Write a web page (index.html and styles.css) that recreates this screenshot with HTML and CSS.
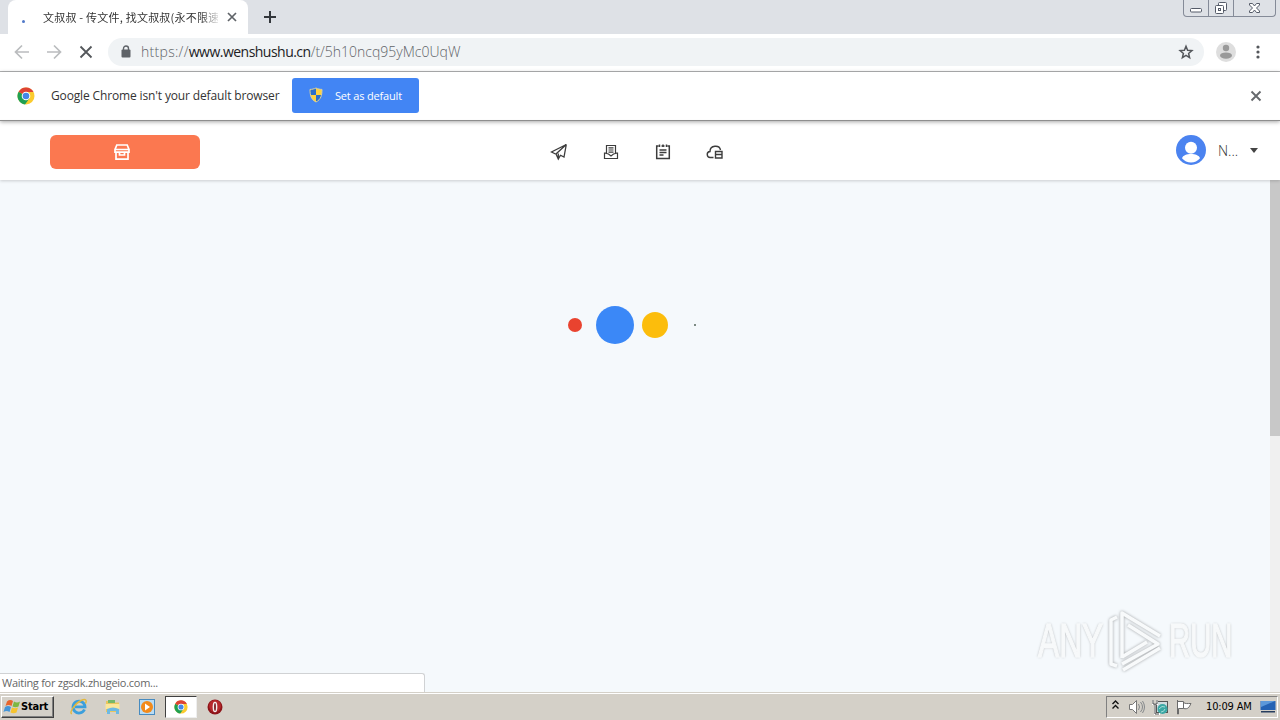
FILE: index.html
```
<!DOCTYPE html>
<html lang="en">
<head>
<meta charset="utf-8">
<title>Desktop</title>
<link rel="stylesheet" href="styles.css">
</head>
<body>

<div class="tabstrip">
  <div class="tab-edge"></div>
  <div class="tab">
    <span class="spinner"></span>
    <span class="tab-title">文叔叔 - 传文件, 找文叔叔(永不限速</span>
    <svg class="tab-close" width="10" height="10" viewBox="0 0 10 10"><path d="M1 1l8 8M9 1l-8 8" stroke="#5f6368" stroke-width="1.7"/></svg>
  </div>
  <svg class="new-tab" width="12" height="12" viewBox="0 0 12 12"><path d="M6 0v12M0 6h12" stroke="#33373c" stroke-width="2"/></svg>
  <div class="window-buttons">
    <span class="wb"><svg width="14" height="6" viewBox="0 0 14 6"><rect x="1.5" y="1.5" width="11" height="3.5" rx="1" fill="#fff" stroke="#555b68"/></svg></span>
    <span class="wb"><svg width="14" height="14" viewBox="0 0 14 14" fill="#fff" stroke="#555b68"><rect x="4.500" y="1.500" width="8" height="8" rx="1"/><rect x="1.500" y="4.500" width="8" height="8" rx="1"/><rect x="4.500" y="7.500" width="2" height="2"/></svg></span>
    <span class="wb wb-wide"><svg width="13" height="12" viewBox="0 0 13 12"><path d="M1.500 1.500h3l2 2.500 2-2.500h3v1.500l-3 3 3 3v1.500h-3l-2-2.500-2 2.500h-3V9l3-3-3-3z" fill="#fff" stroke="#555b68"/></svg></span>
  </div>
</div>

<div class="toolbar">
  <svg class="nav" width="16" height="16" viewBox="0 0 16 16" fill="none" stroke="#babcbe" stroke-width="1.7"><path d="M15 8H2M8 1.500L1.500 8 8 14.500"/></svg>
  <svg class="nav" width="16" height="16" viewBox="0 0 16 16" fill="none" stroke="#babcbe" stroke-width="1.7"><path d="M1 8h13M8 1.500L14.500 8 8 14.500"/></svg>
  <svg class="nav" width="16" height="16" viewBox="0 0 16 16" fill="none" stroke="#54575b" stroke-width="1.8"><path d="M2.500 2.500l11 11M13.500 2.500l-11 11"/></svg>
  <div class="omnibox">
    <svg width="10" height="13" viewBox="0 0 10 13"><rect x="0.500" y="4.500" width="9" height="8" rx="1" fill="#5f6368"/><path d="M2.500 5V3.500a2.500 2.500 0 0 1 5 0V5" fill="none" stroke="#5f6368" stroke-width="1.400"/></svg>
    <span class="url"><span class="scheme">https://</span><b>www.wenshushu.cn</b>/t/5h10ncq95yMc0UqW</span>
    <svg class="star" width="16" height="16" viewBox="0 0 16 16"><path d="M8 2.200l1.600 4 4.300.4-3.300 2.800 1 4.200L8 11.400l-3.600 2.200 1-4.200-3.300-2.800 4.300-.4z" fill="none" stroke="#54575b" stroke-width="1.500"/></svg>
  </div>
  <svg class="profile" width="20" height="20" viewBox="0 0 20 20"><circle cx="10" cy="10" r="10" fill="#dedede"/><circle cx="10" cy="6" r="3.200" fill="#999"/><ellipse cx="10" cy="13.600" rx="6" ry="3.200" fill="#999"/></svg>
  <svg class="menu" width="4" height="14" viewBox="0 0 4 14" fill="#54575b"><circle cx="2" cy="2" r="1.600"/><circle cx="2" cy="7" r="1.600"/><circle cx="2" cy="12" r="1.600"/></svg>
</div>

<div class="infobar">
  <svg class="chrome" width="18" height="18" viewBox="0 0 18 18"><use href="#chrome-logo"/></svg>
  <span class="info-text">Google Chrome isn't your default browser</span>
  <div class="default-btn">
    <svg width="14" height="16" viewBox="0 0 14 16"><path d="M7 1c2 1 4 1.400 6 1.400 0 6-1 10-6 12.600C2 12.400 1 8.400 1 2.400 3 2.400 5 2 7 1z" fill="#ffd23d"/><path d="M7 1v7H1.300Q1 5.500 1 2.400 4.500 2.300 7 1zM7 8h5.700C12 11.500 10.500 13.500 7 15z" fill="#2b6fc9"/><path d="M7 1c2 1 4 1.400 6 1.400 0 6-1 10-6 12.600C2 12.400 1 8.400 1 2.400 3 2.400 5 2 7 1z" fill="none" stroke="#d8d0a0"/></svg>
    <span>Set as default</span>
  </div>
  <svg class="info-close" width="12" height="12" viewBox="0 0 12 12"><path d="M1.500 1.500l9 9M10.500 1.500l-9 9" stroke="#66696d" stroke-width="1.900"/></svg>
</div>

<div class="site-header">
  <div class="shop-btn">
    <svg width="18" height="18" viewBox="0 0 18 18" fill="none" stroke="#fff" stroke-width="1.700"><path d="M3.800 2h10.400l1.800 4.500v2.700H2V6.500zM3 9v7.200h12V9M2 6.500h14M6.500 9v3h5V9"/></svg>
  </div>
  <div class="site-nav">
    <svg width="18" height="18" viewBox="0 0 18 18" fill="none" stroke="#3c3c3c" stroke-width="1.300"><path d="M16.300 1.500L1.500 9l4 2M16.300 1.500L14 14l-4-2M16.300 1.500L6 11l2.300 5 2-3.500M8.300 16v-5.500"/></svg>
    <svg width="18" height="18" viewBox="0 0 18 18" fill="none" stroke="#3c3c3c" stroke-width="1.200"><path d="M4.500 10V2.500h9V10M6.500 4.800h5M6.500 7h5M6.500 9.200h5M4.500 10h-2v5.500h13V10h-2M2.500 10l4 1 2.500 2 2.500-2 4-1"/></svg>
    <svg width="18" height="18" viewBox="0 0 18 18" fill="none" stroke="#3c3c3c" stroke-width="1.500"><path d="M4.500 3H2.700v12.500h12.600V3h-1.800M7.500 3h3M5.500 1.500v2.500M9 1.500v2.500M12.500 1.500v2.500M5.500 7h7M5.500 9.500h7M5.500 12h4"/></svg>
    <svg width="18" height="18" viewBox="0 0 18 18" fill="none" stroke="#3c3c3c" stroke-width="1.400"><path d="M7.500 14.500H4.500a3 3 0 0 1-.5-6c0-6.500 9.500-7 10.500-1.500M9.500 8.500h6.500v6.500H9.500zM9.500 11.500H16"/></svg>
  </div>
  <div class="user">
    <svg width="30" height="30" viewBox="0 0 30 30"><circle cx="15" cy="15" r="15" fill="#4b83f0"/><circle cx="15" cy="12.800" r="6" fill="#fff"/><path d="M6 23.200c1.500-5.600 16.500-5.600 18 0-4.500 5.600-13.500 5.600-18 0z" fill="#fff"/></svg>
    <span class="user-name">N...</span>
    <span class="caret"></span>
  </div>
</div>

<div class="page">
  <div class="page-body">
    <div class="loader">
      <span class="cell"><i class="dot red"></i></span>
      <span class="cell"><i class="dot blue"></i></span>
      <span class="cell"><i class="dot yellow"></i></span>
      <span class="cell"><i class="dot green"></i></span>
    </div>
  </div>
  <div class="scrollbar"><div class="thumb"></div></div>

  <div class="status">Waiting for zgsdk.zhugeio.com...</div>
  <div class="watermark">
    <span class="wm-text">ANY</span>
    <svg width="60" height="66" viewBox="0 0 60 66" fill="none" stroke-linejoin="round" stroke="#f8fafb" stroke-width="3.500"><path d="M17 50V5l38 23M17 13v35M23 17l30 19-36 20M12 9L6 12v44l6 2M17 49l25-15M18 62l37-22"/></svg>
    <span class="wm-text wm-run">RUN</span>
  </div>
</div>

<div class="taskbar">
  <div class="start">
    <svg width="18" height="16" viewBox="0 0 18 16"><path d="M4 2.500Q7 0 10 2L8.500 7Q5.500 5 2.500 7z" fill="#e8652c"/><path d="M11 2.500Q14 4.500 17 2.500L15.500 7.500Q12.500 9 9.500 7.500z" fill="#7db742"/><path d="M2 8Q5 6 8 8L6.500 13Q3.500 11 .5 13z" fill="#4595d8"/><path d="M9 8.500Q12 10 15 8.500L13.500 13.500Q10.500 15 7.500 13.500z" fill="#f6c32e"/></svg>
    <span>Start</span>
  </div>
  <div class="quick">
    <svg width="18" height="18" viewBox="0 0 18 18" fill="none"><path d="M14.500 11.500A6 6 0 1 1 15 8.800H5" stroke="#3b9fdc" stroke-width="2.800"/><path d="M2 15.500C-1.500 16 4 6 11 2.500c5-2.500 6 0 4.500 3" stroke="#e3b83d" stroke-width="1.400"/></svg>
  </div>
  <div class="quick">
    <svg width="18" height="18" viewBox="0 0 18 18"><path d="M2 3h5l1 1.500h7V14H2z" fill="#e9c65e"/><path d="M4 2h7v3H4z" fill="#75b869"/><path d="M1.500 6h14v5h-14z" fill="#fae79c"/><path d="M3 16v-5q6-3 12 0v5h-3v-3H6v3z" fill="#6db9e3"/></svg>
  </div>
  <div class="quick">
    <svg width="18" height="18" viewBox="0 0 18 18"><rect x="1.500" y="1.500" width="15" height="15" fill="#b9dcf4" stroke="#478bc0"/><circle cx="9" cy="9" r="6" fill="#f28a1b"/><path d="M7 5.500l5 3.500-5 3.500z" fill="#fff"/></svg>
  </div>
  <div class="quick active">
    <svg width="14" height="14" viewBox="0 0 18 18">
      <g id="chrome-logo">
        <circle cx="9" cy="9" r="8.500" fill="#fbcb2e"/>
        <path d="M9 9L1.600 4.700A8.500 8.500 0 0 0 8 17.400L12.700 11z" fill="#1fa052"/>
        <path d="M9 9L1.600 4.700A8.500 8.500 0 0 1 16.500 5H9z" fill="#dd4335"/>
        <circle cx="9" cy="9" r="4.300" fill="#fff"/><circle cx="9" cy="9" r="3.300" fill="#4487e8"/>
      </g>
    </svg>
  </div>
  <div class="quick">
    <svg width="16" height="16" viewBox="0 0 16 16"><circle cx="8" cy="8" r="7.500" fill="#8e1419"/><circle cx="8" cy="7" r="6" fill="#b7282c"/><ellipse cx="8" cy="8" rx="2.400" ry="5.300" fill="#f4eeee"/><ellipse cx="8" cy="8" rx=".9" ry="4" fill="#76171c"/></svg>
  </div>
  <div class="tray">
    <svg class="t-up" width="7" height="10" viewBox="0 0 7 10" fill="none" stroke="#111" stroke-width="1.400"><path d="M.5 4l3-3 3 3M.5 8.500l3-3 3 3"/></svg>
    <svg class="t-sound" width="18" height="16" viewBox="0 0 18 16"><path d="M1.500 5.500h3l4-4v13l-4-4h-3z" fill="#fff" stroke="#777"/><path d="M10.500 5q2 3 0 6M12.500 3q4 5 0 10M14.500 2q4 6 0 12" fill="none" stroke="#85888b"/></svg>
    <svg class="t-net" width="16" height="16" viewBox="0 0 16 16"><rect x="4.500" y="2.500" width="11" height="11" fill="#d0dce0" stroke="#555"/><path d="M1 1v4h4V1M3 5v10h5" fill="none" stroke="#fff" stroke-width="2"/><path d="M1 1v4h4V1M3 5v10h4" fill="none" stroke="#444"/><circle cx="10.500" cy="10" r="5" fill="#3aa7a4"/><path d="M7 10q3-4 6-2M9 13q3 0 4-3" stroke="#a6ded8" fill="none"/></svg>
    <svg class="t-flag" width="16" height="16" viewBox="0 0 16 16"><path d="M1.500 1v14h1V9.500h5v-7h-6M7.500 3.500c2 1.500 4 1 7.500 1-2 4-3 6-7.500 5" fill="#fff" stroke="#6b6b6b"/></svg>
    <span class="clock">10:09 AM</span>
    <svg class="t-desk" width="16" height="13" viewBox="0 0 16 13"><path d="M.5 1h15v9H.5z" fill="#2462b4"/><path d="M1 1h14L1 7z" fill="#5c98da"/><path d="M1 11h14v1.500H1z" fill="#273d5e"/></svg>
  </div>
</div>

</body>
</html>
```

FILE: styles.css
```
* {
  box-sizing: border-box;
}

body {
  margin: 0;
  width: 1280px;
  height: 720px;
  overflow: hidden;
  display: flex;
  flex-direction: column;
  background: #fff;
  font-family: "Open Sans", "Noto Sans", "Noto Sans CJK SC", sans-serif;
  font-size: 12px;
  color: #333;
}

svg {
  display: block;
  flex: none;
}

/* tabs */
.tabstrip {
  height: 34px;
  flex: none;
  display: flex;
  background: #dee1e6;
}

.tab-edge {
  width: 8px;
  background: #dee1e6;
}

.tab {
  width: 240px;
  display: flex;
  align-items: center;
  background: #fff;
  border-radius: 8px 8px 0 0;
}

.spinner {
  width: 3px;
  height: 3px;
  margin: 8px 0 0 14px;
  border-radius: 50%;
  background: #5179c8;
}

.tab-title {
  width: 175px;
  margin: 0 0 1px 18px;
  overflow: hidden;
  white-space: nowrap;
  font-family: "Noto Sans CJK SC", sans-serif;
  font-size: 11px;
  letter-spacing: 0.22px;
  -webkit-mask-image: linear-gradient(to right, #000 158px, transparent 178px);
  mask-image: linear-gradient(to right, #000 158px, transparent 178px);
}

.tab-close {
  margin-left: 9px;
}

.new-tab {
  margin: 11px 0 0 16px;
}

.window-buttons {
  display: flex;
  height: 17px;
  margin: 0 4px 0 auto;
  border: 1px solid #858b98;
  border-top: none;
  border-radius: 0 0 4px 4px;
}

.wb {
  width: 25px;
  display: flex;
  align-items: center;
  justify-content: center;
  border-right: 1px solid #858b98;
}

.wb:first-child svg {
  margin-top: 4px;
}

.wb-wide {
  width: 41px;
  border-right: none;
}

/* address row */
.toolbar {
  height: 38px;
  flex: none;
  display: flex;
  align-items: center;
  padding: 0 20px 2px 14px;
  border-bottom: 1px solid #b3b4b5;
}

.nav {
  margin-right: 16px;
}

.omnibox {
  width: 1096px;
  height: 28px;
  margin-left: -2px;
  padding: 0 10px 0 13px;
  display: flex;
  align-items: center;
  border-radius: 14px;
  background: #f0f3f5;
}

.url {
  margin-left: 10px;
  font-size: 14px;
  font-weight: 300;
  color: #5f6368;
}

.scheme {
  letter-spacing: 0.3px;
}

.url b {
  font-weight: 400;
  letter-spacing: -0.52px;
  color: #202124;
}

.star {
  margin-left: auto;
}

.profile {
  margin-left: 12px;
}

.menu {
  margin-left: auto;
}

/* default browser notice */
.infobar {
  height: 49px;
  flex: none;
  display: flex;
  align-items: center;
  padding: 0 18px 1px 17px;
  border-bottom: 1px solid #8e8e8e;
  box-shadow: 0 1px 4px rgba(0, 0, 0, 0.35);
  position: relative;
  z-index: 2;
}

.info-text {
  width: 241px;
  margin-left: 16px;
  white-space: nowrap;
  font-size: 12px;
  letter-spacing: -0.14px;
}

.default-btn {
  width: 127px;
  height: 35px;
  padding: 0 0 1px 17px;
  display: flex;
  align-items: center;
  gap: 12px;
  border-radius: 3px;
  background: #4285f4;
  color: #fff;
  font-size: 11px;
  letter-spacing: -0.17px;
}

.info-close {
  margin-left: auto;
}

/* site header */
.site-header {
  height: 59px;
  flex: none;
  display: flex;
  align-items: center;
  padding: 0 22px 0 50px;
  background: #fff;
  box-shadow: 0 1px 3px rgba(0, 0, 0, 0.18);
  position: relative;
  z-index: 1;
}

.shop-btn {
  width: 150px;
  height: 34px;
  margin-top: 3px;
  padding-right: 6px;
  display: flex;
  align-items: center;
  justify-content: center;
  border-radius: 6px;
  background: #fb7850;
}

.site-nav {
  display: flex;
  gap: 34px;
  margin: 3px 0 0 350px;
}

.user {
  display: flex;
  align-items: center;
  margin: 0 0 1px auto;
}

.user-name {
  width: 32px;
  margin-left: 12px;
  font-size: 14px;
  font-weight: 300;
}

.caret {
  border: 4.5px solid transparent;
  border-top: 5px solid #444;
  border-bottom: none;
}

/* page */
.page {
  height: 512px;
  flex: none;
  display: flex;
  position: relative;
  background: #f5f9fc;
}

.page-body {
  flex: 1;
  padding-top: 125px;
}

.loader {
  display: flex;
  justify-content: center;
}

.cell {
  width: 40px;
  height: 40px;
  display: flex;
  align-items: center;
  justify-content: center;
}

.dot {
  border-radius: 50%;
}

.red {
  width: 14px;
  height: 14px;
  background: #e9432f;
}

.blue {
  width: 38px;
  height: 38px;
  background: #3b88f7;
}

.yellow {
  width: 26px;
  height: 26px;
  background: #fcbd0c;
}

.green {
  width: 2px;
  height: 2px;
  background: #53655b;
}

.scrollbar {
  width: 10px;
  background: #f0f0f0;
}

.thumb {
  height: 256px;
  background: #c8c8c8;
}

.status {
  position: absolute;
  left: 0;
  bottom: 0;
  width: 425px;
  height: 19px;
  padding-left: 2px;
  line-height: 18px;
  border: 1px solid #d0d2d4;
  border-width: 1px 1px 0 0;
  border-top-right-radius: 3px;
  background: #fff;
  color: #666;
  font-size: 11px;
  letter-spacing: -0.27px;
}

.watermark {
  position: absolute;
  left: 1038px;
  bottom: 18px;
  display: flex;
  align-items: center;
}

.watermark svg {
  margin-left: 1px;
  filter: drop-shadow(0 0 1.5px rgba(0, 0, 0, 0.35));
}

.wm-text {
  width: 66px;
  font-family: "Liberation Sans", sans-serif;
  font-size: 48px;
  line-height: 66px;
  color: #f7f9fa;
  -webkit-text-stroke: 1.5px #f7f9fa;
  text-shadow: 0 0 3px rgba(0, 0, 0, 0.4);
  transform: scaleX(0.66);
  transform-origin: left;
}

.wm-run {
  margin-left: 4px;
  transform: scaleX(0.61);
}

/* taskbar */
.taskbar {
  height: 28px;
  flex: none;
  display: flex;
  align-items: center;
  padding: 0 0 0 1px;
  border-top: 1px solid #d4d0c8;
  box-shadow: inset 0 1px 0 #fff;
  background: #d4d0c8;
  color: #000;
}

.start {
  width: 53px;
  height: 22px;
  margin-right: 9px;
  padding-left: 1px;
  display: flex;
  align-items: center;
  border: 1px solid;
  border-color: #fff #404040 #404040 #fff;
  box-shadow: inset -1px -1px 0 #808080;
  font-family: "DejaVu Sans Condensed", "DejaVu Sans", sans-serif;
  font-size: 11px;
  font-weight: bold;
  letter-spacing: -0.2px;
}

.quick {
  width: 32px;
  height: 22px;
  margin-right: 2px;
  display: flex;
  align-items: center;
  justify-content: center;
}

.active {
  background: #fff;
  border: 1px solid;
  border-color: #404040 #eee #eee #404040;
}

.tray {
  width: 172px;
  height: 22px;
  margin: 0 2px 0 auto;
  padding: 0 1px 0 5px;
  display: flex;
  align-items: center;
  border: 1px solid;
  border-color: #808080 #fff #fff #808080;
}

.t-up {
  margin-bottom: 3px;
}

.t-sound {
  margin-left: 9px;
}

.t-net {
  margin-left: 6px;
}

.t-flag {
  margin-left: 8px;
}

.clock {
  width: 54px;
  margin-left: 14px;
  white-space: nowrap;
  font-family: "DejaVu Sans Condensed", "DejaVu Sans", sans-serif;
  font-size: 11px;
  letter-spacing: -0.15px;
}
```
